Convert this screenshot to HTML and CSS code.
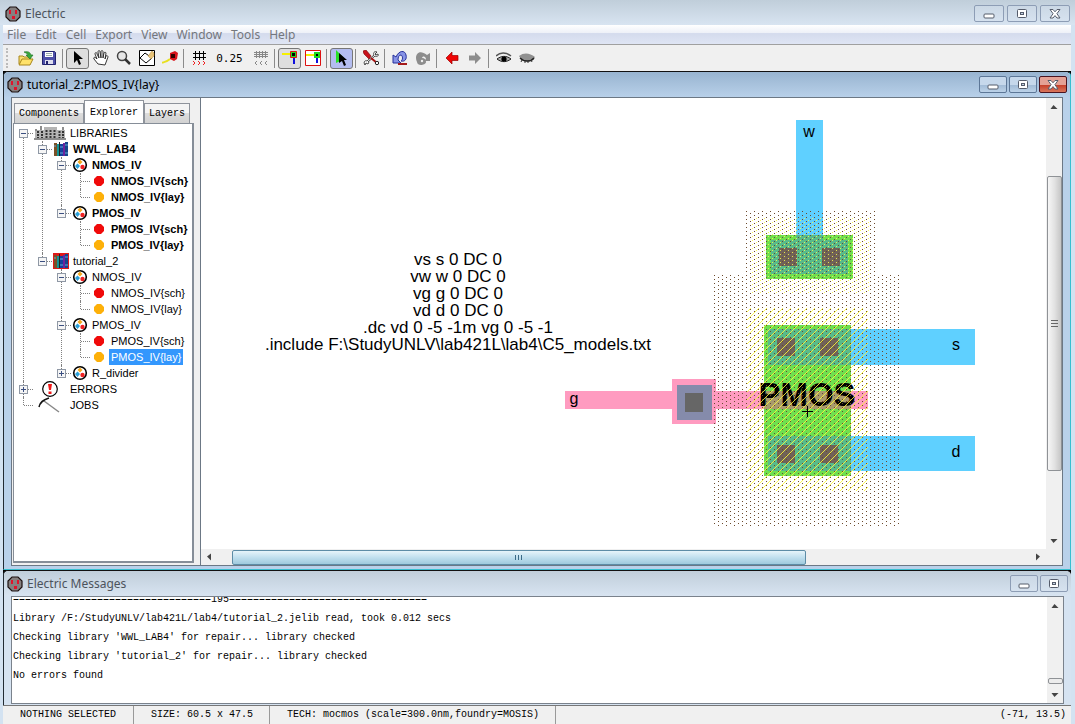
FILE: index.html
```html
<!DOCTYPE html>
<html lang="en">

<head>
    <meta charset="UTF-8">
    <meta name="viewport" content="width=device-width, initial-scale=1.0">
    <title>Electric</title>
    <link rel="stylesheet" href="styles.css">
</head>

<body>
    <!-- shared icons -->
    <svg class="defs" aria-hidden="true">
        <symbol id="logo" viewBox="0 0 16 16">
            <path d="M5 1h6l4 4v6l-4 4H5l-4-4V5z" fill="#858080" stroke="#1c1010" stroke-width="1.2" />
            <path d="M4 4h2v4H4zM10 4h2v4h-2zM7 10h3v3H7z" fill="#e0142c" />
        </symbol>
        <symbol id="min" viewBox="0 0 12 10">
            <rect x="1" y="5" width="10" height="4" rx="1" fill="#fff" stroke="#555c6b" />
        </symbol>
        <symbol id="max" viewBox="0 0 12 10">
            <rect x="1.5" y=".5" width="9" height="8" rx="1" fill="#fff" stroke="#555c6b" />
            <rect x="4.5" y="3.5" width="3" height="2" fill="#c5d3e3" stroke="#555c6b" />
        </symbol>
        <symbol id="close" viewBox="0 0 12 10">
            <path d="M1 .5h3l2 2.3 2-2.3h3L7.9 4.700 11 9H8L6 6.600 4 9H1l3.100-4.300z" fill="#fff" stroke="#555c6b" />
        </symbol>
        <symbol id="cell" viewBox="0 0 16 16">
            <circle cx="8" cy="8" r="6.3" fill="#fff" stroke="#000" stroke-width="1.6" />
            <path d="M8 2.500l2.500 2.500L8 7.500 5.500 5z" fill="#f5a81c" />
            <path d="M5.500 6.500L8 9l-2.500 3L3 9z" fill="#2a9fd8" />
            <circle cx="10.5" cy="10" r="2.2" fill="#e22" />
        </symbol>
        <symbol id="sch" viewBox="0 0 16 16">
            <path d="M6 3h4l3 3v4l-3 3H6l-3-3V6z" fill="#f00a0a" />
        </symbol>
        <symbol id="lay" viewBox="0 0 16 16">
            <path d="M6 3h4l3 3v4l-3 3H6l-3-3V6z" fill="#fdb009" />
        </symbol>
        <symbol id="books" viewBox="0 0 16 16">
            <path d="M1 2h3v13H1z" fill="#7b5127" />
            <path d="M4 3h2v12H4z" fill="#129494" />
            <path d="M6 1h1v14H6z" fill="#222" />
            <path d="M7 3h3v12H7z" fill="#15409c" />
            <path d="M10 2h2v13h-2z" fill="#6c239c" />
            <path d="M12 1h3v14h-3z" fill="#15458c" />
            <path d="M1 5h2M7 6h3M12 4h3M12 12h3M7 12h3" stroke="#67a9d8" />
        </symbol>
    </svg>

    <div class="app">
        <header class="titlebar">
            <svg class="logo"><use href="#logo" /></svg>
            <h1>Electric</h1>
            <div class="controls">
                <button aria-label="Minimize"><svg><use href="#min" /></svg></button>
                <button aria-label="Maximize"><svg><use href="#max" /></svg></button>
                <button aria-label="Close"><svg><use href="#close" /></svg></button>
            </div>
        </header>

        <nav class="menubar">
            <button>File</button>
            <button>Edit</button>
            <button>Cell</button>
            <button>Export</button>
            <button>View</button>
            <button>Window</button>
            <button>Tools</button>
            <button>Help</button>
        </nav>

        <div class="toolbar">
            <span class="grip"></span>
            <button aria-label="Open library">
                <svg viewBox="0 0 16 16">
                    <path d="M1 14V6h4l1 1h6v3" fill="#f8e070" stroke="#a8861c" />
                    <path d="M1 15l3-6h11l-3 6z" fill="#ffe26a" stroke="#a8861c" />
                    <path d="M6 2c4-1 6 0 7 3h2l-3 4-4-4h2c0-1-2-2-4-3z" fill="#38a83c" stroke="#176c20" stroke-width=".6" />
                </svg>
            </button>
            <button aria-label="Save library">
                <svg viewBox="0 0 16 16">
                    <path d="M1.500 1.500h12l1 1v12h-13z" fill="#4d4fa8" stroke="#22236e" />
                    <path d="M4 2h8v5H4z" fill="#fff" />
                    <path d="M5 3.500h6M5 5.500h6" stroke="#9aa" />
                    <path d="M4 10h8v4H4z" fill="#dde" />
                    <path d="M5 11h2v3H5z" fill="#22236e" />
                </svg>
            </button>
            <span class="sep"></span>
            <button class="pressed" aria-label="Select">
                <svg viewBox="0 0 16 16">
                    <path d="M4 1v12l3-3 2 5 2-1-2-5h4z" />
                </svg>
            </button>
            <button aria-label="Pan">
                <svg viewBox="0 0 16 16">
                    <path d="M5 14L1 9c-1-2 1-2 2-1l1 1-2-5c0-2 2-2 2 0l2 4-1-6c0-2 2-2 2 0l1 6V2c0-2 2-2 2 0v6l1-5c0-1 2-1 2 0l-1 6 1-3c1-1 2 0 2 1-1 3-2 5-3 8z" fill="#fff" stroke="#222" stroke-width=".9" />
                </svg>
            </button>
            <button aria-label="Zoom">
                <svg viewBox="0 0 16 16">
                    <circle cx="6" cy="6" r="4.5" fill="#e6e6e6" stroke="#444" stroke-width="1.5" />
                    <path d="M9 9l5 5" stroke="#333" stroke-width="2.5" />
                </svg>
            </button>
            <button aria-label="Outline">
                <svg viewBox="0 0 16 16">
                    <path d="M.5.5h15v15H.5z" fill="#fff" stroke="#000" />
                    <path d="M1 8l5-5 7 5-6 5z" fill="none" stroke="#000" />
                    <path d="M9 6l4-5 2 2v3l-3 3z" fill="#e8c47a" stroke="#b58a3a" stroke-width=".5" />
                </svg>
            </button>
            <button aria-label="Measure">
                <svg viewBox="0 0 16 16">
                    <path d="M0 13c3-2 3 0 8-4" fill="none" stroke="#e8e020" stroke-width="2" />
                    <path d="M8 3l5-2 3 2-1 6-3 2-4-2z" fill="#d8141c" />
                    <path d="M9 4h4v4H9z" fill="#300" />
                </svg>
            </button>
            <span class="sep"></span>
            <button aria-label="Toggle grid">
                <svg viewBox="0 0 16 16" fill="none">
                    <path d="M4.500 1v9M8.500 1v9M12.500 1v9M2 3.500h13M2 7.500h13" stroke="#000" />
                    <path d="M2 11l2 2-2 2M7 11l2 2-2 2M12 11l2 2-2 2" stroke="#e22" />
                </svg>
            </button>
            <span class="spacing">0.25</span>
            <button aria-label="Smaller spacing">
                <svg viewBox="0 0 16 16" fill="none" stroke="#888">
                    <path d="M3.500 1v7M6.500 1v7M9.500 1v7M12.500 1v7M1 2.500h14M1 4.500h14M1 6.500h14" />
                    <path d="M4 11l-2 2 2 2M9 11l-2 2 2 2M14 11l-2 2 2 2" />
                </svg>
            </button>
            <span class="sep"></span>
            <button class="pressed" aria-label="Select objects">
                <svg viewBox="0 0 16 16">
                    <path d="M0 3h9v2H0z" fill="#f6f000" />
                    <path d="M11 8h2v6h-2z" fill="#11d" />
                    <path d="M8.500 1.500h6v6h-6z" fill="#1cdc1c" stroke="#d11" />
                    <path d="M10 3h3v3h-3z" />
                </svg>
            </button>
            <button aria-label="Select area">
                <svg viewBox="0 0 16 16">
                    <path d="M.5.5h15v15H.5z" fill="#fff" stroke="#d11" />
                    <path d="M1 4h8v2H1z" fill="#f6f000" />
                    <path d="M11 8h2v5h-2z" fill="#11d" />
                    <path d="M9 2h6v6H9z" fill="#1cdc1c" />
                    <path d="M11 4h2v2h-2z" />
                </svg>
            </button>
            <span class="sep"></span>
            <button class="pressed special" aria-label="Special select">
                <svg viewBox="0 0 16 16">
                    <path d="M2 0v13l9-4z" fill="#2ae02a" />
                    <path d="M5 3v10l3-2 2 5 2-1-2-5h3z" />
                </svg>
            </button>
            <span class="sep"></span>
            <button aria-label="Preferences">
                <svg viewBox="0 0 16 16">
                    <path d="M14 2c-3-1-4 1-3 3l-7 6c-2-1-4 1-2 4l1-2 2 1c1-1 1-2 0-2l7-6c2 1 4 0 3-2l-2 1-1-1z" fill="#fff" stroke="#333" stroke-width=".9" />
                    <path d="M0 1l3-1 5 6-2 3-5-5z" fill="#c8121c" stroke="#700" stroke-width=".6" />
                    <path d="M8 8l6 5" stroke="#a11" stroke-width="2" />
                    <circle cx="14" cy="13" r="1.7" fill="#fff" stroke="#222" />
                </svg>
            </button>
            <span class="sep"></span>
            <button aria-label="Undo">
                <svg viewBox="0 0 16 16">
                    <path d="M1 5v8h8l-3-3c0-3 1-5 3-5 2 1 2 5 0 6 4 1 6-2 5-6-1-5-7-5-10 2z" fill="#8793e6" stroke="#26309a" />
                    <path d="M6 13h9v2H6z" fill="#a41a1a" />
                </svg>
            </button>
            <button aria-label="Redo">
                <svg viewBox="0 0 16 16">
                    <path d="M15 3v8H9l2-2C10 6 8 6 7 8c3 0 4 2 4 4s-3 3-5 3-4-1-4-3C-1 6 3-2 12 5z" fill="#8d8d8d" />
                    <circle cx="7" cy="11" r="1.2" fill="#f0f0f0" />
                </svg>
            </button>
            <span class="sep"></span>
            <button aria-label="Back">
                <svg viewBox="0 0 16 16">
                    <path d="M2 8l6-6v3.500h6v5H8V14z" fill="#f00505" stroke="#900" stroke-width=".7" />
                </svg>
            </button>
            <button aria-label="Forward">
                <svg viewBox="0 0 16 16">
                    <path d="M14 8L8 2v3.500H2v5h6V14z" fill="#8d8d8d" />
                </svg>
            </button>
            <span class="sep"></span>
            <button aria-label="Expand cells">
                <svg viewBox="0 0 16 16">
                    <path d="M0 6c4-4 10-4 15 0" fill="none" stroke="#555" stroke-width="1.5" />
                    <path d="M1 9c4-3 9-4 14 0-4 3-9 4-14 0z" fill="#aaa" stroke="#222" />
                    <circle cx="8" cy="9" r="2.6" />
                </svg>
            </button>
            <button aria-label="Unexpand cells">
                <svg viewBox="0 0 16 16">
                    <path d="M0 6c5-4 11-3 16 1-3 6-12 7-16-1z" fill="#909090" />
                    <path d="M1 8c4 4 11 4 14 0" fill="none" stroke="#222" stroke-width="1.3" />
                    <path d="M3 10l-1 2M6 11v2M9 11v2M12 10l1 2" stroke="#333" />
                </svg>
            </button>
        </div>

        <main class="desktop">
            <section class="window active">
                <header class="titlebar">
                    <svg class="logo"><use href="#logo" /></svg>
                    <h2>tutorial_2:PMOS_IV{lay}</h2>
                    <div class="controls">
                        <button aria-label="Minimize"><svg><use href="#min" /></svg></button>
                        <button aria-label="Maximize"><svg><use href="#max" /></svg></button>
                        <button class="red" aria-label="Close"><svg><use href="#close" /></svg></button>
                    </div>
                </header>
                <div class="workspace">
                    <aside class="sidebar">
                        <div class="tabs">
                            <button>Components</button>
                            <button class="current">Explorer</button>
                            <button>Layers</button>
                        </div>
                        <ul class="tree">
                            <li>
                                <div class="row">
                                    <button class="toggle" aria-label="Collapse"></button>
                                    <svg class="wide" viewBox="0 0 34 16">
                                        <path d="M2 5h9V2h13v3h8v9H2z" fill="#b4b4b4" />
                                        <path d="M2 4h2v2H2zM7 1h2v4H7zM29 2h2v3h-2zM1 13h32v2H1z" fill="#8d8d8d" />
                                        <path d="M5 6v7M9 6v7M13.500 5v9M17.500 5v9M21.500 5v9M26.500 6v7M30 6v7" stroke="#333" stroke-width="2" stroke-dasharray="2 1" />
                                    </svg>
                                    <span>LIBRARIES</span>
                                </div>
                                <ul>
                                    <li class="bold">
                                        <div class="row">
                                            <button class="toggle" aria-label="Collapse"></button>
                                            <svg><use href="#books" /></svg>
                                            <span>WWL_LAB4</span>
                                        </div>
                                        <ul>
                                            <li>
                                                <div class="row">
                                                    <button class="toggle" aria-label="Collapse"></button>
                                                    <svg><use href="#cell" /></svg>
                                                    <span>NMOS_IV</span>
                                                </div>
                                                <ul>
                                                    <li><div class="row leaf"><svg><use href="#sch" /></svg><span>NMOS_IV{sch}</span></div></li>
                                                    <li><div class="row leaf"><svg><use href="#lay" /></svg><span>NMOS_IV{lay}</span></div></li>
                                                </ul>
                                            </li>
                                            <li>
                                                <div class="row">
                                                    <button class="toggle" aria-label="Collapse"></button>
                                                    <svg><use href="#cell" /></svg>
                                                    <span>PMOS_IV</span>
                                                </div>
                                                <ul>
                                                    <li><div class="row leaf"><svg><use href="#sch" /></svg><span>PMOS_IV{sch}</span></div></li>
                                                    <li><div class="row leaf"><svg><use href="#lay" /></svg><span>PMOS_IV{lay}</span></div></li>
                                                </ul>
                                            </li>
                                        </ul>
                                    </li>
                                    <li>
                                        <div class="row">
                                            <button class="toggle" aria-label="Collapse"></button>
                                            <svg class="changed"><use href="#books" /></svg>
                                            <span>tutorial_2</span>
                                        </div>
                                        <ul>
                                            <li>
                                                <div class="row">
                                                    <button class="toggle" aria-label="Collapse"></button>
                                                    <svg><use href="#cell" /></svg>
                                                    <span>NMOS_IV</span>
                                                </div>
                                                <ul>
                                                    <li><div class="row leaf"><svg><use href="#sch" /></svg><span>NMOS_IV{sch}</span></div></li>
                                                    <li><div class="row leaf"><svg><use href="#lay" /></svg><span>NMOS_IV{lay}</span></div></li>
                                                </ul>
                                            </li>
                                            <li>
                                                <div class="row">
                                                    <button class="toggle" aria-label="Collapse"></button>
                                                    <svg><use href="#cell" /></svg>
                                                    <span>PMOS_IV</span>
                                                </div>
                                                <ul>
                                                    <li><div class="row leaf"><svg><use href="#sch" /></svg><span>PMOS_IV{sch}</span></div></li>
                                                    <li><div class="row leaf"><svg><use href="#lay" /></svg><span class="selected">PMOS_IV{lay}</span></div></li>
                                                </ul>
                                            </li>
                                            <li>
                                                <div class="row">
                                                    <button class="toggle closed" aria-label="Expand"></button>
                                                    <svg><use href="#cell" /></svg>
                                                    <span>R_divider</span>
                                                </div>
                                            </li>
                                        </ul>
                                    </li>
                                </ul>
                            </li>
                            <li>
                                <div class="row">
                                    <button class="toggle closed" aria-label="Expand"></button>
                                    <svg class="wide" viewBox="0 0 34 16">
                                        <circle cx="17" cy="8" r="7.3" fill="#fff" stroke="#000" stroke-width="1.2" />
                                        <path d="M15 3h4l-1 6h-2zM15.500 10.500h3v2.500h-3z" fill="#f01818" />
                                    </svg>
                                    <span>ERRORS</span>
                                </div>
                            </li>
                            <li>
                                <div class="row leaf">
                                    <svg class="wide" viewBox="0 0 34 16">
                                        <path d="M11 4l15 11" stroke="#888" stroke-width="1.5" />
                                        <path d="M6 10c1-5 4-7 10-9" fill="none" stroke="#111" stroke-width="1.5" />
                                    </svg>
                                    <span>JOBS</span>
                                </div>
                            </li>
                        </ul>
                    </aside>

                    <div class="editor">
                        <svg class="layout" role="img" aria-label="PMOS_IV layout">
                            <defs>
                                <pattern id="well" width="8" height="8" patternUnits="userSpaceOnUse">
                                    <path d="M1 1h1v1H1zM5 3h1v1H5zM1 5h1v1H1zM5 7h1v1H5z" fill="#6b4a2c" />
                                </pattern>
                                <pattern id="nselect" width="8" height="8" patternUnits="userSpaceOnUse">
                                    <path d="M3 0h1v1H3zM7 2h1v1H7zM3 4h1v1H3zM7 6h1v1H7z" fill="#fbf748" />
                                </pattern>
                                <pattern id="pselect" width="8" height="8" patternUnits="userSpaceOnUse">
                                    <path d="M7 0h1v1H7zM6 1h1v1H6zM5 2h1v1H5zM4 3h1v1H4zM3 4h1v1H3zM2 5h1v1H2zM1 6h1v1H1zM0 7h1v1H0z" fill="#fbf73c" />
                                </pattern>
                            </defs>

                            <!-- active -->
                            <g fill="#6fe04e">
                                <rect x="565" y="137" width="87" height="44" />
                                <rect x="563" y="227" width="87" height="151" />
                            </g>
                            <!-- poly -->
                            <g fill="#ff9bc0">
                                <rect x="364" y="293" width="303" height="18" />
                                <rect x="471" y="281" width="44" height="45" />
                            </g>
                            <rect x="563" y="293" width="87" height="18" fill="#a99b6c" />
                            <!-- metal -->
                            <g fill="#5fd0ff">
                                <rect x="595" y="22" width="27" height="115" />
                                <rect x="650" y="231" width="124" height="36" />
                                <rect x="650" y="338" width="124" height="35" />
                            </g>
                            <g fill="#58bb8a">
                                <rect x="595" y="137" width="27" height="5" />
                                <rect x="570" y="142" width="77" height="34" />
                                <rect x="567" y="231" width="83" height="36" />
                                <rect x="567" y="338" width="83" height="35" />
                            </g>
                            <rect x="476" y="287" width="35" height="35" fill="#858bab" />
                            <!-- contacts -->
                            <g fill="#706258">
                                <rect x="578" y="150" width="18" height="18" />
                                <rect x="621" y="150" width="18" height="18" />
                                <rect x="576" y="240" width="18" height="18" />
                                <rect x="619" y="240" width="18" height="18" />
                                <rect x="576" y="347" width="18" height="18" />
                                <rect x="619" y="347" width="18" height="18" />
                                <rect x="484" y="295" width="18" height="19" fill="#666" />
                            </g>

                            <text class="device" x="606" y="308">PMOS</text>

                            <path d="M542 112h134v64h24v252H513V176h29z" fill="url(#well)" />
                            <rect class="implant" x="551" y="120" width="117" height="76" fill="url(#nselect)" />
                            <rect class="implant" x="546" y="210" width="121" height="183" fill="url(#pselect)" />
                            <path d="M601 313.500h11M606.500 308v11" stroke="#000" />

                            <text x="608" y="39">w</text>
                            <text x="755" y="252">s</text>
                            <text x="755" y="359">d</text>
                            <text x="373" y="306">g</text>

                            <g class="spice">
                                <text x="257" y="167">vs s 0 DC 0</text>
                                <text x="257" y="184">vw w 0 DC 0</text>
                                <text x="257" y="201">vg g 0 DC 0</text>
                                <text x="257" y="218">vd d 0 DC 0</text>
                                <text x="257" y="235">.dc vd 0 -5 -1m vg 0 -5 -1</text>
                                <text x="257" y="252">.include F:\StudyUNLV\lab421L\lab4\C5_models.txt</text>
                            </g>
                        </svg>
                        <div class="scroll vertical">
                            <i class="arrow up"></i>
                            <div class="track"><div class="thumb"></div></div>
                            <i class="arrow down"></i>
                        </div>
                        <div class="scroll horizontal">
                            <i class="arrow left"></i>
                            <div class="track"><div class="thumb"></div></div>
                            <i class="arrow right"></i>
                        </div>
                    </div>
                </div>
            </section>

            <section class="window messages">
                <header class="titlebar">
                    <svg class="logo"><use href="#logo" /></svg>
                    <h2>Electric Messages</h2>
                    <div class="controls">
                        <button aria-label="Minimize"><svg><use href="#min" /></svg></button>
                        <button aria-label="Maximize"><svg><use href="#max" /></svg></button>
                    </div>
                </header>
                <div class="log">
                    <pre>=================================195=================================
Library /F:/StudyUNLV/lab421L/lab4/tutorial_2.jelib read, took 0.012 secs
Checking library 'WWL_LAB4' for repair... library checked
Checking library 'tutorial_2' for repair... library checked
No errors found</pre>
                    <div class="scroll vertical">
                        <i class="arrow up"></i>
                        <div class="track"><div class="thumb"></div></div>
                        <i class="arrow down"></i>
                    </div>
                </div>
            </section>
        </main>

        <footer class="status">
            <span class="selection">NOTHING SELECTED</span>
            <span class="size">SIZE: 60.5 x 47.5</span>
            <span class="tech">TECH: mocmos (scale=300.0nm,foundry=MOSIS)</span>
            <span class="coords">(-71, 13.5)</span>
        </footer>
    </div>
</body>

</html>
```
FILE: styles.css
```css
* {
    box-sizing: border-box;
}

body {
    margin: 0;
    background: #d3e2f1;
    font-family: "Liberation Sans", Arial, sans-serif;
    font-size: 11px;
    color: #000;
}

button {
    padding: 0;
    border: 0;
    background: none;
    font: inherit;
    color: inherit;
}

h1,
h2 {
    margin: 0;
    font-size: 12px;
    font-weight: normal;
}

.defs {
    position: absolute;
    width: 0;
    height: 0;
}

.app {
    display: flex;
    flex-direction: column;
    height: 100vh;
}

/* title bars */
.titlebar {
    display: flex;
    flex: none;
    align-items: center;
    gap: 4px;
    height: 25px;
    padding: 2px 5px 0;
    background: linear-gradient(#c0ceda, #d8e4f1);
    font-family: "Noto Sans", "Open Sans", sans-serif;
    color: #4c535c;
}

.logo {
    width: 16px;
    height: 16px;
}

.controls {
    display: flex;
    gap: 3px;
    margin-left: auto;
}

.controls button {
    display: flex;
    align-items: center;
    justify-content: center;
    width: 30px;
    height: 17px;
    border: 1px solid #8d9db5;
    border-radius: 2px;
    background: linear-gradient(#cbd8e5, #d6e2ef);
}

.controls svg {
    width: 12px;
    height: 10px;
}

/* menu */
.menubar {
    display: flex;
    flex: none;
    gap: 9px;
    height: 20px;
    margin: 0 4px 0 3px;
    padding: 0 4px;
    border-bottom: 1px solid #a0a0a0;
    background: linear-gradient(#fff, #eef1f8 40%, #d4dbed 45%, #dfe5f4);
    font-family: "Noto Sans", "Open Sans", sans-serif;
    font-size: 12px;
    color: #74777d;
}

/* toolbar */
.toolbar {
    display: flex;
    flex: none;
    align-items: center;
    height: 26px;
    margin: 0 4px 0 3px;
    padding-left: 3px;
    background: #f0f0f0;
}

.toolbar button {
    display: flex;
    align-items: center;
    justify-content: center;
    width: 23px;
    height: 21px;
}

.toolbar svg {
    width: 16px;
    height: 16px;
}

.toolbar .pressed {
    border: 1px solid #777;
    border-radius: 3px;
    background: #dedede;
}

.toolbar .special {
    background: #b4bdf0;
}

.grip {
    width: 2px;
    height: 20px;
    margin-right: 6px;
    border-left: 2px dotted #bbb;
}

.sep {
    width: 1px;
    height: 19px;
    margin: 0 3px 0 2px;
    background: #8b8b8b;
}

.spacing {
    width: 39px;
    font: 11px "DejaVu Sans Mono", monospace;
    text-align: center;
}

/* inner windows */
.desktop {
    display: flex;
    flex: 1;
    flex-direction: column;
    min-height: 0;
    margin: 0 4px 0 3px;
    background: #000;
}

.window {
    display: flex;
    flex-direction: column;
    border-left: 1px solid #222b33;
    border-top: 1px solid #111;
    border-radius: 5px 5px 0 0;
    padding: 0 7px 4px;
    background: #d6e3f1;
}

.window .titlebar {
    margin: 0 -7px;
    padding: 0 3px;
    border-radius: 5px 5px 0 0;
}

.window .controls {
    gap: 2px;
}

.window .controls button {
    width: 28px;
}

.active {
    flex: 1;
    min-height: 0;
    border-right: 1px solid #38bfd0;
    border-bottom: 1px solid #38bfd0;
    padding-bottom: 3px;
    background: #b9d1ea;
}

.active .titlebar {
    background: linear-gradient(#98b4d0, #b8d0e9);
    color: #000;
}

.active .controls button {
    border-color: #5d7797;
    background: linear-gradient(#c6d8eb 50%, #9fb9d4 50%, #bcd2e8);
}

.active .controls .red {
    border-color: #4a1420;
    background: linear-gradient(#e4a195 50%, #c33a25 50%, #d9765c);
}

.workspace {
    display: flex;
    flex: 1;
    min-height: 0;
    border: 1px solid #6c7885;
    background: #f0f0f0;
}

/* explorer */
.sidebar {
    display: flex;
    flex-direction: column;
    width: 188px;
    padding: 2px 6px 2px 1px;
}

.tabs {
    display: flex;
    flex: none;
    align-items: flex-end;
    height: 23px;
    padding-left: 1px;
    font-family: "Liberation Mono", monospace;
    font-size: 10px;
}

.tabs button {
    height: 20px;
    padding: 0 4px;
    border: 1px solid #8e939b;
    border-bottom: 0;
    background: linear-gradient(#f4f4f4 45%, #dcdcdc 50%, #d2d2d2);
}

.tabs .current {
    height: 23px;
    padding: 0 5px;
    background: #fff;
}

.tree {
    flex: 1;
    border: 2px solid #868e98;
    border-width: 1px 2px 2px 1px;
    background: #fff;
}

.tree,
.tree ul {
    margin: 0;
    padding: 0;
    list-style: none;
}

.tree {
    padding-top: 1px;
}

.tree ul {
    margin-left: 19px;
}

.tree li {
    position: relative;
}

.tree li::before {
    content: "";
    position: absolute;
    top: 0;
    bottom: 0;
    left: 9px;
    border-left: 1px dotted #808080;
}

.tree > li:first-child::before {
    top: 8px;
}

.tree li:last-child::before {
    bottom: auto;
    height: 8px;
}

.row {
    position: relative;
    display: flex;
    align-items: center;
    height: 16px;
    padding-left: 5px;
    white-space: nowrap;
}

.row::before {
    content: "";
    position: absolute;
    top: 8px;
    left: 10px;
    width: 9px;
    border-top: 1px dotted #808080;
}

.toggle {
    position: relative;
    width: 9px;
    height: 9px;
    margin-right: 5px;
    border: 1px solid #8f98a5;
    background: linear-gradient(#3b4f81, #3b4f81) center / 5px 1px no-repeat #f5f5f5;
}

.toggle.closed {
    background: linear-gradient(#3b4f81, #3b4f81) center / 5px 1px no-repeat, linear-gradient(#3b4f81, #3b4f81) center / 1px 5px no-repeat #f5f5f5;
}

.leaf {
    padding-left: 19px;
}

.row svg {
    flex: none;
    width: 16px;
    height: 16px;
    margin: 0 4px 0 1px;
}

.row .wide {
    width: 34px;
    margin: 0 3px 0 0;
}

.row .changed {
    background: #e01818;
}

.bold {
    font-weight: bold;
}

.selected {
    margin-left: -2px;
    padding: 2px;
    background: #3397fd;
    color: #fff;
}

/* layout editor */
.editor {
    display: grid;
    flex: 1;
    grid-template-columns: 1fr 16px;
    grid-template-rows: 1fr 16px;
    min-width: 0;
    border-left: 1px solid #6c7885;
}

.layout {
    width: 100%;
    height: 100%;
    background: #fff;
    font-size: 16px;
    text-anchor: middle;
}

.implant {
    opacity: .85;
}

.device {
    font-size: 33px;
    font-weight: bold;
}

.spice {
    font-size: 17px;
}

/* scroll bars */
.scroll {
    display: flex;
    align-items: center;
    background: #f0f0f0;
}

.vertical {
    flex-direction: column;
}

.track {
    display: flex;
    flex: 1;
}

.vertical .track {
    flex-direction: column;
    width: 15px;
    padding-top: 61px;
}

.horizontal .track {
    height: 15px;
    padding-left: 14px;
}

.thumb {
    border: 1px solid #8f9296;
    border-radius: 2px;
}

.vertical .thumb {
    height: 83%;
    background: repeating-linear-gradient(#666 0 1px, transparent 1px 3px) center / 7px 7px no-repeat, linear-gradient(90deg, #f6f6f6, #e2e2e2 50%, #c6c6c6);
}

.horizontal .thumb {
    width: 72%;
    border-color: #5d8ca6;
    background: repeating-linear-gradient(90deg, #3a6a86 0 1px, transparent 1px 3px) center / 7px 5px no-repeat, linear-gradient(#e6f4fa, #c0dfee 50%, #9fcadd);
}

.arrow {
    flex: none;
    width: 17px;
    height: 17px;
    background: #444;
}

.up {
    clip-path: polygon(8px 7px, 12px 11px, 5px 11px);
}

.down {
    clip-path: polygon(5px 7px, 12px 7px, 8px 11px);
}

.left {
    clip-path: polygon(6px 8px, 10px 5px, 10px 12px);
}

.right {
    clip-path: polygon(7px 5px, 11px 8px, 7px 12px);
}

/* messages */
.messages {
    padding-bottom: 1px;
}

.log {
    display: flex;
    height: 108px;
    overflow: hidden;
    border: 1px solid #7a828c;
    background: #fff;
}

.log pre {
    flex: 1;
    margin: -7px 0 0;
    padding-left: 1px;
    font: 10px/19px "Liberation Mono", monospace;
}

.log .vertical {
    width: 16px;
}

.log .track {
    justify-content: flex-end;
    padding: 0 0 2px;
}

.log .thumb {
    height: 6px;
    background: #ececec;
}

/* status bar */
.status {
    display: flex;
    flex: none;
    height: 19px;
    margin: 0 4px 0 3px;
    border-top: 1px solid #777;
    background: #f0f0f0;
    font: 10px/18px "Liberation Mono", monospace;
}

.status span {
    padding-left: 17px;
    border-right: 1px solid #999;
}

.selection {
    width: 131px;
}

.size {
    width: 136px;
}

.tech {
    width: 286px;
}

.status .coords {
    margin-left: auto;
    padding-right: 5px;
    border: 0;
}
```
